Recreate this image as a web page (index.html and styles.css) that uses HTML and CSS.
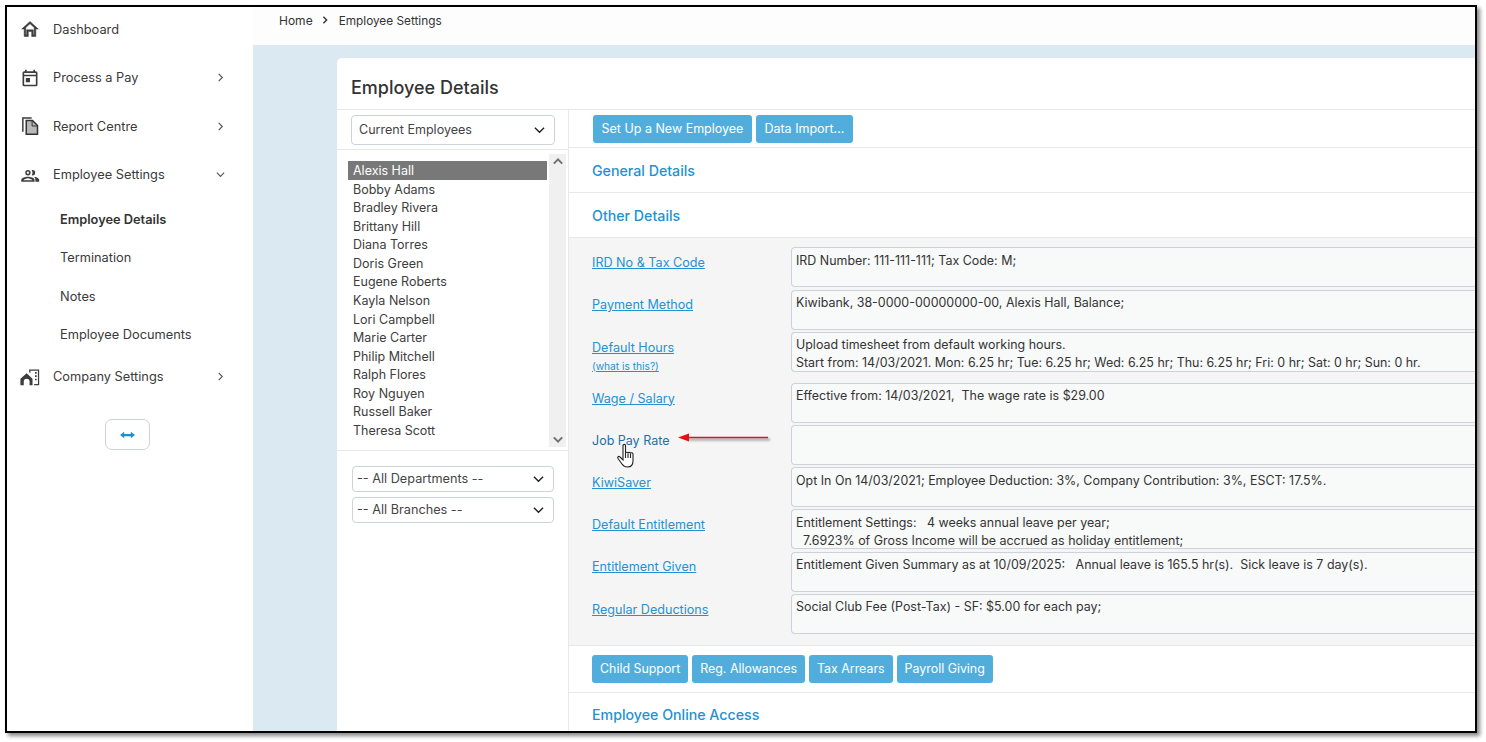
FILE: index.html
```html
<!DOCTYPE html>
<html lang="en">
<head>
<meta charset="utf-8">
<title>Employee Details</title>
<link rel="stylesheet" href="styles.css">
</head>
<body>
<div class="frame">
  <nav class="sidebar">
    <a class="nav-item"><svg class="nav-icon" viewBox="0 0 24 24"><path class="bold" d="M12 3 2 12h3v9h5v-6h4v6h5v-9h3L12 3Zm5 16h-1v-6H8v6H7v-8.800l5-4.500 5 4.500V19Z"/></svg><span class="nav-label">Dashboard</span></a>
    <a class="nav-item"><svg class="nav-icon" viewBox="0 0 24 24"><path d="M19 4h-1V2h-2v2H8V2H6v2H5a2 2 0 0 0-2 2v14a2 2 0 0 0 2 2h14a2 2 0 0 0 2-2V6a2 2 0 0 0-2-2Zm0 16H5V10h14v10ZM5 8V6h14v2H5Zm2 4h5v5H7v-5Z"/></svg><span class="nav-label">Process a Pay</span><svg class="nav-chev" viewBox="0 0 10 10"><path d="M3 1l4 4-4 4"/></svg></a>
    <a class="nav-item"><svg class="nav-icon" viewBox="0 0 24 24"><path d="M2.500 1.500H14v1.800H4.300V19H2.500V1.500Z"/><path class="doc" d="M7.500 5.500H15l6 6V22H7.500V5.500Z"/><path class="doc-fold" d="M14.500 5.500v6.500H21"/></svg><span class="nav-label">Report Centre</span><svg class="nav-chev" viewBox="0 0 10 10"><path d="M3 1l4 4-4 4"/></svg></a>
    <a class="nav-item"><svg class="nav-icon" viewBox="0 0 24 24"><path d="M9.500 12.500a3.200 3.200 0 1 0 0-6.400 3.200 3.200 0 0 0 0 6.400Zm0-4.600a1.400 1.400 0 1 1 0 2.800 1.400 1.400 0 0 1 0-2.800Zm0 6.300c-2.700 0-8 1.300-8 3.800V20h16v-2c0-2.500-5.300-3.800-8-3.800Zm-5.500 4c.8-.7 3.500-2.200 5.500-2.200s4.700 1.500 5.500 2.200H4ZM15 12.500a3.200 3.200 0 0 0 0-6.400c-.4 0-.8.100-1.100.2a5 5 0 0 1 0 6c.3.100.7.200 1.100.200Zm1.500 1.700c1.300.9 2 2.200 2 3.800v2h4.500v-2c0-2.300-3.700-3.500-6.500-3.800Z"/></svg><span class="nav-label">Employee Settings</span><svg class="nav-chev" viewBox="0 0 10 10"><path d="M1 3l4 4 4-4"/></svg></a>
    <a class="sub-item sub-active">Employee Details</a>
    <a class="sub-item">Termination</a>
    <a class="sub-item">Notes</a>
    <a class="sub-item">Employee Documents</a>
    <a class="nav-item nav-last"><svg class="nav-icon" viewBox="0 0 24 24"><path d="M.5 14 8 7.500l7 6.500v8h-3.500v-4.500a3.500 3.500 0 0 0-7 0V22H.5v-8Z"/><path d="M11 3h12v19h-6v-1.500h4.500v-16H12.500V7.500L11 6.200V3Zm7 3h2v2h-2V6Zm0 4h2v2h-2v-2Zm0 4h2v2h-2v-2Z"/></svg><span class="nav-label">Company Settings</span><svg class="nav-chev" viewBox="0 0 10 10"><path d="M3 1l4 4-4 4"/></svg></a>
    <button class="collapse" type="button" aria-label="Resize"><svg viewBox="0 0 16 8" width="15" height="8"><path d="M0 4l4.500-3.500V2.800h7V.5L16 4l-4.500 3.500V5.200h-7v2.300L0 4Z"/></svg></button>
  </nav>
  <main class="main">
    <div class="crumbs"><span>Home</span><svg class="crumb-sep" viewBox="0 0 10 10"><path d="M3 1l4 4-4 4"/></svg><span class="crumb-now">Employee Settings</span></div>
    <div class="canvas">
      <section class="card">
        <h1 class="card-title">Employee Details</h1>
        <div class="card-body">
          <div class="picker">
            <div class="picker-top">
              <div class="select select-lg">Current Employees<svg class="sel-chev" viewBox="0 0 12 8"><path d="M1 1.500l5 5 5-5"/></svg></div>
            </div>
            <div class="list-wrap">
              <ul class="emp-list">
                <li class="emp-on">Alexis Hall</li><li>Bobby Adams</li><li>Bradley Rivera</li><li>Brittany Hill</li><li>Diana Torres</li><li>Doris Green</li><li>Eugene Roberts</li><li>Kayla Nelson</li><li>Lori Campbell</li><li>Marie Carter</li><li>Philip Mitchell</li><li>Ralph Flores</li><li>Roy Nguyen</li><li>Russell Baker</li><li>Theresa Scott</li>
              </ul>
              <div class="scroll"><svg viewBox="0 0 12 8"><path d="M1 6.500l5-5 5 5"/></svg><svg viewBox="0 0 12 8"><path d="M1 1.500l5 5 5-5"/></svg></div>
            </div>
            <div class="filters">
              <div class="select">-- All Departments --<svg class="sel-chev" viewBox="0 0 12 8"><path d="M1 1.500l5 5 5-5"/></svg></div>
              <div class="select">-- All Branches --<svg class="sel-chev" viewBox="0 0 12 8"><path d="M1 1.500l5 5 5-5"/></svg></div>
            </div>
          </div>
          <div class="detail">
            <div class="btn-row btn-row-top"><a class="btn">Set Up a New Employee</a><a class="btn">Data Import...</a></div>
            <div class="sec-head">General Details</div>
            <div class="sec-head">Other Details</div>
            <div class="panel">
              <div class="row"><a class="row-link">IRD No &amp; Tax Code</a><div class="box">IRD Number: 111-111-111; Tax Code: M;</div></div>
              <div class="row"><a class="row-link">Payment Method</a><div class="box">Kiwibank, 38-0000-00000000-00, Alexis Hall, Balance;</div></div>
              <div class="row row-tall"><div class="row-cell"><a class="row-link">Default Hours</a><a class="row-help">(what is this?)</a></div><div class="box">Upload timesheet from default working hours.<br>Start from: 14/03/2021. Mon: 6.25 hr; Tue: 6.25 hr; Wed: 6.25 hr; Thu: 6.25 hr; Fri: 0 hr; Sat: 0 hr; Sun: 0 hr.</div></div>
              <div class="row"><a class="row-link">Wage / Salary</a><div class="box">Effective from: 14/03/2021,&nbsp; The wage rate is $29.00</div></div>
              <div class="row"><a class="row-link row-hover">Job Pay Rate</a><div class="box"></div></div>
              <div class="row"><a class="row-link">KiwiSaver</a><div class="box">Opt In On 14/03/2021; Employee Deduction: 3%, Company Contribution: 3%, ESCT: 17.5%.</div></div>
              <div class="row"><a class="row-link">Default Entitlement</a><div class="box">Entitlement Settings: &nbsp; 4 weeks annual leave per year;<br>&nbsp; 7.6923% of Gross Income will be accrued as holiday entitlement;</div></div>
              <div class="row"><a class="row-link">Entitlement Given</a><div class="box">Entitlement Given Summary as at 10/09/2025: &nbsp; Annual leave is 165.5 hr(s).&nbsp; Sick leave is 7 day(s).</div></div>
              <div class="row"><a class="row-link">Regular Deductions</a><div class="box">Social Club Fee (Post-Tax) - SF: $5.00 for each pay;</div></div>
              <svg class="arrow" viewBox="0 0 96 16" width="96" height="16"><path class="arrow-shadow" d="M10 9.500 92 9.500"/><path class="arrow-line" d="M8 7.500H90"/><path class="arrow-head" d="M0 7.500 11 3.500v8L0 7.500Z"/></svg>
              <svg class="hand" viewBox="0 0 20 26" width="20" height="26"><path d="M6 2.500c0-1.500 2.500-1.500 2.500 0V10c0-1 2.500-1.200 2.500.3 0-1.300 2.500-1.300 2.500.2 0-1 2.500-1 2.500.5V18c0 3.500-2 6-5.500 6-2.500 0-4-.8-5.500-3L1 15.500c-.9-1.500.8-2.800 2-1.500l3 3V2.500Z"/><path d="M8.500 10v5M11 10.500v4.500M13.500 10.500v4.500"/></svg>
            </div>
            <div class="btn-row btn-row-bottom"><a class="btn">Child Support</a><a class="btn">Reg. Allowances</a><a class="btn">Tax Arrears</a><a class="btn">Payroll Giving</a></div>
            <div class="sec-head sec-last">Employee Online Access</div>
          </div>
        </div>
      </section>
    </div>
  </main>
</div>
</body>
</html>
```
FILE: styles.css
```css
* { box-sizing: border-box; }
html, body { margin: 0; height: 100%; background: #fff; overflow: hidden; }
body { padding: 5px 0 0 5px; font-family: Inter, "Liberation Sans", sans-serif; font-size: 12.500px; color: #333; }
a { color: inherit; text-decoration: none; }

.frame { width: 1472px; height: 728px; border: 2px solid #000; box-shadow: 3px 3px 4px #888; display: flex; overflow: hidden; background: #fff; }

.sidebar { flex: none; width: 246px; display: flex; flex-direction: column; color: #3a3a3a; font-size: 12.800px; }
.nav-item { display: flex; align-items: center; height: 48.400px; padding: 0 0 3.600px 13px; }
.nav-icon { width: 20px; height: 20px; fill: #3d3d3d; flex: none; }
.nav-icon .bold { stroke: #3d3d3d; stroke-width: .6; }
.nav-icon .doc { fill: #b8b8b8; stroke: #333; stroke-width: 1.800; }
.nav-icon .doc-fold { fill: none; stroke: #333; stroke-width: 1.200; }
.nav-label { margin-left: 13px; flex: 1; }
.nav-chev { width: 9px; height: 9px; margin-right: 28px; fill: none; stroke: #555; stroke-width: 1.300; }
.sub-item { display: flex; align-items: center; height: 38.400px; padding: 0 0 1px 53px; }
.sub-active { font-weight: 600; color: #333; }
.nav-last { height: 46px; margin-top: 1.500px; }
.collapse { align-self: flex-start; margin: 17.500px 0 0 98px; width: 45px; height: 31px; border: 1px solid #cdd3d9; border-radius: 7px; background: #fff; display: flex; align-items: center; justify-content: center; padding: 0; }
.collapse svg { fill: #1e8fd0; }

.main { flex: 1; min-width: 0; display: flex; flex-direction: column; }
.crumbs { flex: none; height: 38px; padding: 0 0 12px 26px; display: flex; align-items: center; gap: 8px; font-size: 12px; color: #333; background: #fdfdfd; }
.crumb-now { font-size: 11.800px; margin-top: 2px; }
.crumb-sep { width: 8px; height: 8px; fill: none; stroke: #333; stroke-width: 1.800; margin: 0 2px 0 0; }
.canvas { flex: 1; min-height: 0; background: #dbeaf2; padding: 13px 0 0 84px; overflow: hidden; }

.card { width: 1300px; height: 700px; background: #fff; border-radius: 5px 0 0 0; }
.card-title { margin: 0; height: 52px; padding: 19px 0 0 14px; font-size: 18px; line-height: 22px; font-weight: 500; color: #333; border-bottom: 1px solid #e8e8e8; }
.card-body { display: flex; }

.picker { flex: none; width: 232px; border-right: 1px solid #e8e8e8; height: 640px; }
.picker-top { height: 40px; padding: 5px 0 0 14px; border-bottom: 1px solid #e8e8e8; }
.select { position: relative; width: 202px; height: 26px; border: 1px solid #cdd3d9; border-radius: 4px; padding: 0 0 1px 4px; display: flex; align-items: center; background: #fff; color: #444; font-size: 12.700px; }
.select-lg { width: 204px; height: 30px; padding: 0 0 2px 7px; font-size: 12.550px; }
.sel-chev { position: absolute; right: 9px; top: 50%; width: 11px; height: 8px; margin-top: -4px; fill: none; stroke: #222; stroke-width: 1.500; }

.list-wrap { height: 301px; padding: 4px 0 0 11px; display: flex; border-bottom: 1px solid #e8e8e8; }
.emp-list { list-style: none; margin: 7px 0 0; padding: 0; width: 199px; color: #3d3d3d; }
.emp-list li { padding-left: 5px; height: 18.570px; line-height: 19.400px; }
.emp-on { background: #787878; color: #fff; }
.scroll { width: 17px; height: 293px; margin-left: 2px; background: #f0f0f0; display: flex; flex-direction: column; justify-content: space-between; align-items: center; padding: 4px 0; }
.scroll svg { width: 10px; height: 7px; fill: none; stroke: #707070; stroke-width: 2.400; }

.filters { padding: 15px 0 0 15px; display: flex; flex-direction: column; gap: 5px; }

.detail { flex: 1; min-width: 0; }
.btn-row { display: flex; gap: 4px; }
.btn-row-top { height: 38px; padding: 5px 0 0 24px; border-bottom: 1px solid #e8e8e8; }
.btn { height: 28px; padding: 0 8.500px 1px; display: flex; align-items: center; background: #51aedc; color: #fff; border-radius: 3px; }
.sec-head { height: 45px; padding: 0 0 0 23px; display: flex; align-items: center; font-weight: 500; font-size: 14.200px; color: #2492d1; border-bottom: 1px solid #e8e8e8; }
.panel { position: relative; height: 408px; padding-top: 9.400px; background: #f5f5f5; border-bottom: 1px solid #e8e8e8; }
.row { display: flex; height: 42.200px; padding-left: 23px; }
.row-tall { height: 51px; }
.row-link { flex: none; width: 199px; padding-top: 7.800px; color: #2492d1; text-decoration: underline; font-size: 12.600px; }
.row-cell { flex: none; width: 199px; padding-top: 7.800px; display: flex; flex-direction: column; }
.row-cell .row-link { width: auto; padding: 0; align-self: flex-start; }
.row-help { font-size: 10.200px; line-height: 12px; margin-top: 5px; color: #2492d1; text-decoration: underline; align-self: flex-start; }
.row-hover { color: #1f6fa8; text-decoration: none; font-size: 12.500px; }
.box { flex: 1; height: 40px; padding: 3.700px 4px; background: #f8f9f9; border: 1px solid #cdd2da; border-right: 0; border-radius: 4px 0 0 4px; line-height: 18px; color: #333; overflow: hidden; font-size: 12.450px; }
.arrow { position: absolute; left: 109px; top: 192px; }
.arrow-shadow { fill: none; stroke: #999; stroke-width: 2; filter: blur(1px); }
.arrow-line { fill: none; stroke: #e0181e; stroke-width: 1.700; }
.arrow-head { fill: #e80f14; }
.hand { position: absolute; left: 47.500px; top: 205px; fill: #fff; stroke: #222; stroke-width: 1.100; }
.btn-row-bottom { height: 47px; padding: 9px 0 0 23px; border-bottom: 1px solid #e8e8e8; }
.btn-row-bottom .btn { padding: 0 8px 2px; font-size: 12.400px; }
.sec-last { border-bottom: 0; padding-bottom: 2px; }
```
